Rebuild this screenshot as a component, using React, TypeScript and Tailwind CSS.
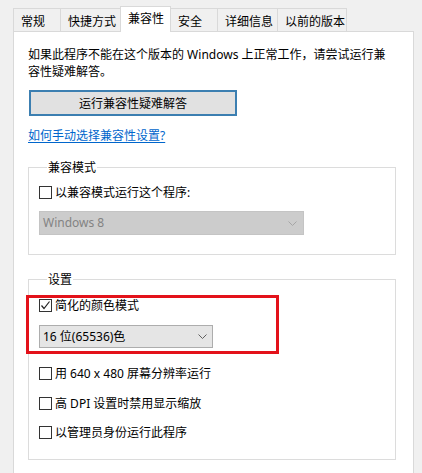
import React from 'react';

const font = { fontFamily: '"Noto Sans", "Noto Sans CJK SC", sans-serif' };

function Chevron({ color }: { color: string }) {
  return (
    <svg width="9" height="5" viewBox="0 0 9 5" fill="none">
      <path d="M0.5 0.5 L4.5 4.5 L8.5 0.5" stroke={color} strokeWidth="1" />
    </svg>
  );
}

function Box({ checked }: { checked?: boolean }) {
  return (
    <span className="w-[13px] h-[13px] border border-[#333333] bg-white flex items-center justify-center shrink-0">
      {checked && (
        <svg width="11" height="11" viewBox="0 0 11 11" fill="none">
          <path d="M1.5 5.5 L4 8.5 L9.5 1.5" stroke="#222" strokeWidth="1.2" />
        </svg>
      )}
    </span>
  );
}

function Check({ label, checked }: { label: string; checked?: boolean }) {
  return (
    <div className="flex items-center gap-[3px] h-[17px] leading-[17px]">
      <Box checked={checked} />
      <span>{label}</span>
    </div>
  );
}

const tabs = [
  { name: '常规', w: 'w-[47px]' },
  { name: '快捷方式', w: 'w-[61px]' },
  { name: '兼容性', w: 'w-[51px]', active: true },
  { name: '安全', w: 'w-[46px]' },
  { name: '详细信息', w: 'w-[60px]' },
  { name: '以前的版本', w: 'w-[70px]' },
];

export default function App() {
  return (
    <div className="w-[422px] h-[473px] bg-[#f0f0f0] overflow-hidden pt-[6px] pl-[13px] text-[12px] text-black" style={font}>
      <div className="flex items-end">
        {tabs.map((t, i) =>
          t.active ? (
            <div key={t.name} className={`${t.w} h-[26px] -mb-px relative z-10 bg-white border-t border-l border-r border-[#d9d9d9] -ml-px pl-[7px] pt-[3px] leading-[17px]`}>
              {t.name}
            </div>
          ) : (
            <div key={t.name} className={`${t.w} h-[23px] border-t border-l border-[#d9d9d9] ${i === tabs.length - 1 ? 'border-r' : ''} ${i === 3 ? 'border-l-0' : ''} pl-[7px] pt-[4px] leading-[17px]`}>
              {t.name}
            </div>
          )
        )}
      </div>
      <div className="w-[401px] h-[450px] bg-white border border-[#d9d9d9] px-[14px] pt-[14px]">
        <p className="leading-[17px]">
          如果此程序不能在这个版本的 Windows 上正常工作，请尝试运行兼
          <br />
          容性疑难解答。
        </p>
        <button className="mt-[10px] ml-px w-[208px] h-[26px] bg-[#e1e1e1] border-2 border-[#3c7fb1] leading-[17px]">
          运行兼容性疑难解答
        </button>
        <div className="mt-[11px] leading-[17px] text-[#0066cc] underline underline-offset-2">如何手动选择兼容性设置?</div>

        <fieldset className="mt-[15px] w-[368px] h-[96px] border border-[#dcdcdc] px-[10px]">
          <legend className="ml-[8px] px-px leading-[17px]">兼容模式</legend>
          <div className="mt-[8px]">
            <Check label="以兼容模式运行这个程序:" />
          </div>
          <div className="mt-[10px] w-[265px] h-[24px] bg-[#cccccc] border border-[#c4c4c4] flex items-center justify-between pl-[3px] pr-[6px] text-[#838383]">
            <span>Windows 8</span>
            <Chevron color="#a6a6a6" />
          </div>
        </fieldset>

        <fieldset className="mt-[16px] w-[368px] h-[189px] border border-[#dcdcdc] px-[10px]">
          <legend className="ml-[8px] px-px leading-[17px]">设置</legend>
          <div className="mt-[7px] -ml-[13px] w-[253px] border-[3px] border-[#e3121a] pl-[10px] pb-[3px]">
            <div className="flex items-center gap-[3px] h-[15px]">
              <Box checked />
              <span className="leading-[15px]">简化的颜色模式</span>
            </div>
            <div className="mt-[12px] w-[174px] h-[23px] bg-[#e5e5e5] border border-[#adadad] flex items-center justify-between pl-[3px] pr-[5px]">
              <span>16 位(65536)色</span>
              <Chevron color="#606060" />
            </div>
          </div>
          <div className="mt-[11px] flex flex-col gap-[12.5px]">
            <Check label="用 640 x 480 屏幕分辨率运行" />
            <Check label="高 DPI 设置时禁用显示缩放" />
            <Check label="以管理员身份运行此程序" />
          </div>
        </fieldset>
      </div>
    </div>
  );
}
